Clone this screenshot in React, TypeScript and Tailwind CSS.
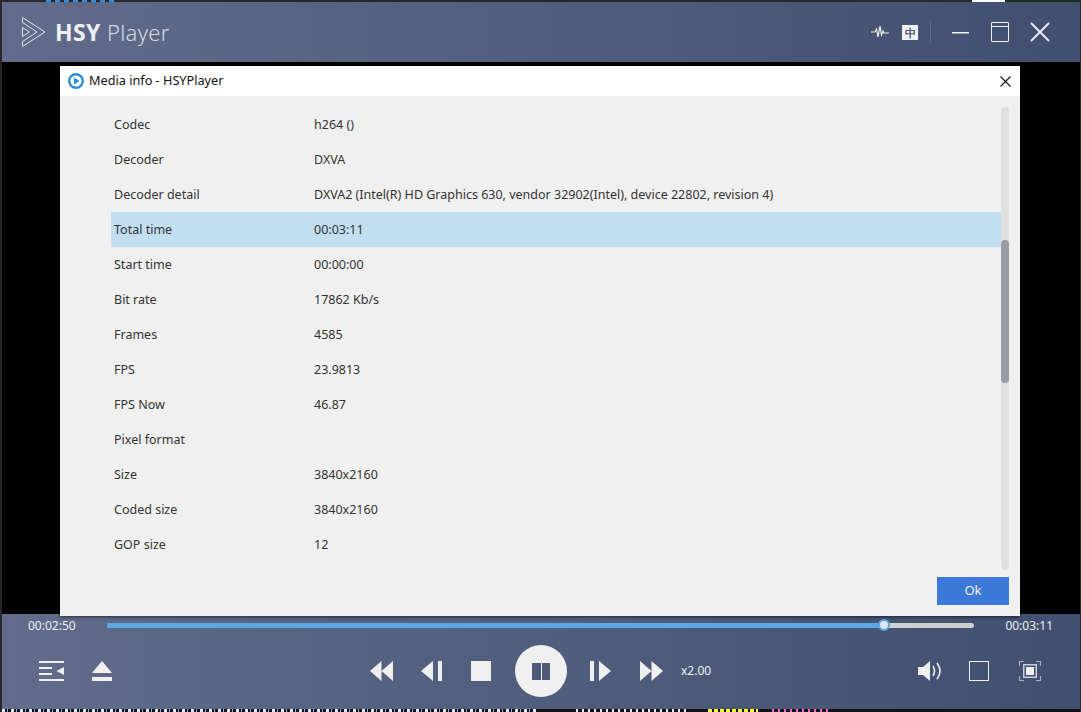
import React from "react";

const rows: [string, string][] = [
  ["Codec", "h264 ()"],
  ["Decoder", "DXVA"],
  ["Decoder detail", "DXVA2 (Intel(R) HD Graphics 630, vendor 32902(Intel), device 22802, revision 4)"],
  ["Total time", "00:03:11"],
  ["Start time", "00:00:00"],
  ["Bit rate", "17862 Kb/s"],
  ["Frames", "4585"],
  ["FPS", "23.9813"],
  ["FPS Now", "46.87"],
  ["Pixel format", ""],
  ["Size", "3840x2160"],
  ["Coded size", "3840x2160"],
  ["GOP size", "12"],
];

const Logo = () => (
  <svg width="24" height="30" viewBox="0 0 24 30" fill="none" stroke="#dfe3ea" strokeWidth="1">
    <path d="M0.5 0.5 L23 15 L0.5 29.5 V24.5 L15 15 L0.5 5.5 Z" />
    <path d="M0.5 10.5 L7.5 15 L0.5 19.5 Z" />
  </svg>
);

const PlayerIcon = () => (
  <svg width="16" height="16" viewBox="0 0 16 16">
    <circle cx="8" cy="8" r="6.8" fill="#fff" stroke="#2b8fe0" strokeWidth="2.4" />
    <path d="M6 4.4 L11.6 8 L6 11.6 Z" fill="#2b8fe0" />
  </svg>
);

export default function App() {
  return (
    <div
      className="flex h-[712px] w-[1081px] flex-col overflow-hidden bg-[#26282c] pl-[2px] pr-px"
      style={{ fontFamily: '"Noto Sans", "Open Sans", sans-serif' }}
    >
      {/* desktop behind the window, top edge */}
      <div className="flex h-[2px] shrink-0">
        <div className="ml-[44px] h-full w-[72px] bg-[repeating-linear-gradient(90deg,#2f8fd8_0_5px,transparent_5px_9px)]" />
        <div className="ml-[854px] h-full w-[33px] bg-white" />
        <div className="h-full flex-1 bg-[#14301c]" />
      </div>

      {/* title bar */}
      <div className="flex h-[60px] shrink-0 items-center bg-gradient-to-r from-[#626c8a] to-[#414f70] pl-[20px] pr-[30px]">
        <Logo />
        <span className="ml-[9px] text-[23px] font-bold tracking-[0.4px] text-[#eef0f4]">HSY</span>
        <span className="ml-[6px] text-[22px] font-light tracking-[0.3px] text-[#d5d9e2]">Player</span>

        <div className="ml-auto flex items-center">
          <svg width="18" height="16" viewBox="0 0 18 16" fill="none" stroke="#f0f0f0" strokeWidth="1.2">
            <path d="M0 8 H4 L5.5 5 L7 13 L9 2 L10.5 11 L12 7 L13 9 H18" />
          </svg>
          <div className="ml-[13px] flex h-[15px] w-[16px] items-center justify-center bg-[#f0f0f0] text-[11px] font-bold leading-none text-[#4a5576]">
            中
          </div>
          <div className="ml-[12px] h-[20px] w-px bg-[#5f6b88]" />
          <svg className="ml-[21px] mt-[1px]" width="17" height="2" viewBox="0 0 17 2">
            <rect width="17" height="1.5" fill="#f0f0f0" />
          </svg>
          <div className="ml-[22px] h-[20px] w-[18px] rounded-[1px] border-[1.5px] border-[#f0f0f0] pt-[3px]">
            <div className="h-px bg-[#f0f0f0]" />
          </div>
          <svg className="ml-[21px]" width="20" height="20" viewBox="0 0 20 20" stroke="#f0f0f0" strokeWidth="1.8">
            <path d="M1 1 L19 19 M19 1 L1 19" />
          </svg>
        </div>
      </div>

      {/* video area */}
      <div className="relative flex-1 bg-black">
        {/* media info dialog */}
        <div className="absolute left-[58px] top-[4px] z-10 flex h-[550px] w-[960px] flex-col bg-[#f0f0f0] text-[12.5px] text-[#333333] shadow-[0_1px_3px_rgba(0,0,0,0.6)]">
          <div className="flex h-[30px] shrink-0 items-center bg-white pl-[8px] pr-[9px]">
            <PlayerIcon />
            <span className="ml-[5px] text-[12.7px] text-[#111111]">Media info - HSYPlayer</span>
            <svg className="ml-auto" width="11" height="11" viewBox="0 0 11 11" stroke="#111" strokeWidth="1.1">
              <path d="M0.5 0.5 L10.5 10.5 M10.5 0.5 L0.5 10.5" />
            </svg>
          </div>

          <div className="flex pl-[51px] pr-[11px] pt-[11px]">
            <div className="flex-1">
              {rows.map(([label, value]) => (
                <div
                  key={label}
                  className={`flex h-[35px] items-center pl-[3px] pt-[2px] ${label === "Total time" ? "bg-[#c2dff2]" : ""}`}
                >
                  <span className="w-[200px]">{label}</span>
                  <span>{value}</span>
                </div>
              ))}
            </div>
            <div className="h-[463px] w-[8px] rounded-[4px] bg-[#e0e0e0] pt-[133px]">
              <div className="h-[143px] rounded-[4px] bg-[#9a9ca3]" />
            </div>
          </div>

          <div className="mt-[7px] flex justify-end pr-[11px]">
            <div className="flex h-[28px] w-[72px] items-center justify-center bg-[#3c78d8] text-[13px] text-[#f0f0f0]">
              Ok
            </div>
          </div>
        </div>
      </div>

      {/* control bar */}
      <div className="flex h-[95px] shrink-0 flex-col bg-gradient-to-r from-[#626c8a] to-[#414f70]">
        <div className="flex h-[22px] items-center pl-[26px] pr-[27px] text-[12px] text-[#eef0f4]">
          <span className="w-[79px] pt-[2px]">00:02:50</span>
          <div className="relative h-[5px] flex-1 rounded-full bg-[#cfcfcf]">
            <div className="h-full w-[776px] rounded-full bg-[#5aa9e6]" />
            <div className="absolute left-[771px] top-[-3.5px] h-[12px] w-[12px] rounded-full border-[2px] border-[#5aa9e6] bg-[#dfe6ec]" />
          </div>
          <span className="ml-[31px] pt-[2px]">00:03:11</span>
        </div>

        <div className="flex flex-1 items-center pb-[3px] text-[#f0f0f0]">
          {/* left */}
          <svg className="ml-[37px]" width="25" height="20" viewBox="0 0 25 20" fill="#f0f0f0">
            <rect width="25" height="2" />
            <rect y="6" width="13" height="2" />
            <rect y="12" width="13" height="2" />
            <rect y="18" width="25" height="2" />
            <path d="M25 6 V14 L17.5 10 Z" />
          </svg>
          <svg className="ml-[28px]" width="20" height="20" viewBox="0 0 20 20" fill="#f0f0f0">
            <path d="M10 0 L20 12 H0 Z" />
            <rect y="16" width="20" height="4" />
          </svg>

          {/* transport */}
          <svg className="ml-[258px]" width="23" height="20" viewBox="0 0 23 20" fill="#f0f0f0">
            <path d="M11.5 0 V20 L0 10 Z" />
            <path d="M23 0 V20 L11.5 10 Z" />
          </svg>
          <svg className="ml-[28px]" width="21" height="20" viewBox="0 0 21 20" fill="#f0f0f0">
            <path d="M12 0 V20 L0 10 Z" />
            <rect x="17" width="4" height="20" />
          </svg>
          <div className="ml-[29px] h-[20px] w-[20px] bg-[#f0f0f0]" />
          <div className="ml-[24px] flex h-[52px] w-[52px] items-center justify-center gap-px rounded-full bg-[#f0f0f0]">
            <div className="h-[17px] w-[8.5px] bg-[#4e5a78]" />
            <div className="h-[17px] w-[8.5px] bg-[#4e5a78]" />
          </div>
          <svg className="ml-[23px]" width="21" height="20" viewBox="0 0 21 20" fill="#f0f0f0">
            <rect width="4" height="20" />
            <path d="M9 0 V20 L21 10 Z" />
          </svg>
          <svg className="ml-[29px]" width="23" height="20" viewBox="0 0 23 20" fill="#f0f0f0">
            <path d="M0 0 V20 L11.5 10 Z" />
            <path d="M11.5 0 V20 L23 10 Z" />
          </svg>
          <span className="ml-[18px] text-[12px] text-[#eef0f4]">x2.00</span>

          {/* right */}
          <svg className="ml-[207px]" width="25" height="20" viewBox="0 0 25 20" fill="none">
            <path d="M0 6 H5 L12 0 V20 L5 14 H0 Z" fill="#f0f0f0" />
            <path d="M15 5 Q18 10 15 15" stroke="#f0f0f0" strokeWidth="1.6" />
            <path d="M19 2 Q25 10 19 18" stroke="#f0f0f0" strokeWidth="1.6" />
          </svg>
          <div className="ml-[26px] h-[20px] w-[20px] border-[1.5px] border-[#f0f0f0]" />
          <svg className="ml-[30px]" width="22" height="20" viewBox="0 0 22 20" fill="none">
            <rect x="4.75" y="3.75" width="12.5" height="12.5" stroke="#c9ced8" strokeWidth="1.5" />
            <rect x="7" y="6" width="8" height="8" fill="#f0f0f0" />
            <path d="M0.5 5 V0.5 H5 M17 0.5 H21.5 V5 M21.5 15 V19.5 H17 M5 19.5 H0.5 V15" stroke="#aab2c4" strokeWidth="1.2" />
          </svg>
        </div>
      </div>

      {/* desktop behind the window, bottom edge: only slivers of other windows show */}
      <div className="flex h-[3px] shrink-0 bg-[#101216]">
        <div className="w-[536px] bg-[repeating-linear-gradient(90deg,#dfe8f5_0_3px,transparent_3px_5px,#8fb4e0_5px_6px,transparent_6px_9px)]" />
        <div className="ml-[38px] w-[112px] bg-[repeating-linear-gradient(90deg,#e8e8e8_0_2px,transparent_2px_6px)]" />
        <div className="ml-[20px] w-[50px] bg-[repeating-linear-gradient(90deg,#ffff33_0_4px,transparent_4px_6px)]" />
        <div className="ml-[14px] w-[56px] bg-[repeating-linear-gradient(90deg,#ff66cc_0_2px,transparent_2px_6px)]" />
      </div>
    </div>
  );
}
